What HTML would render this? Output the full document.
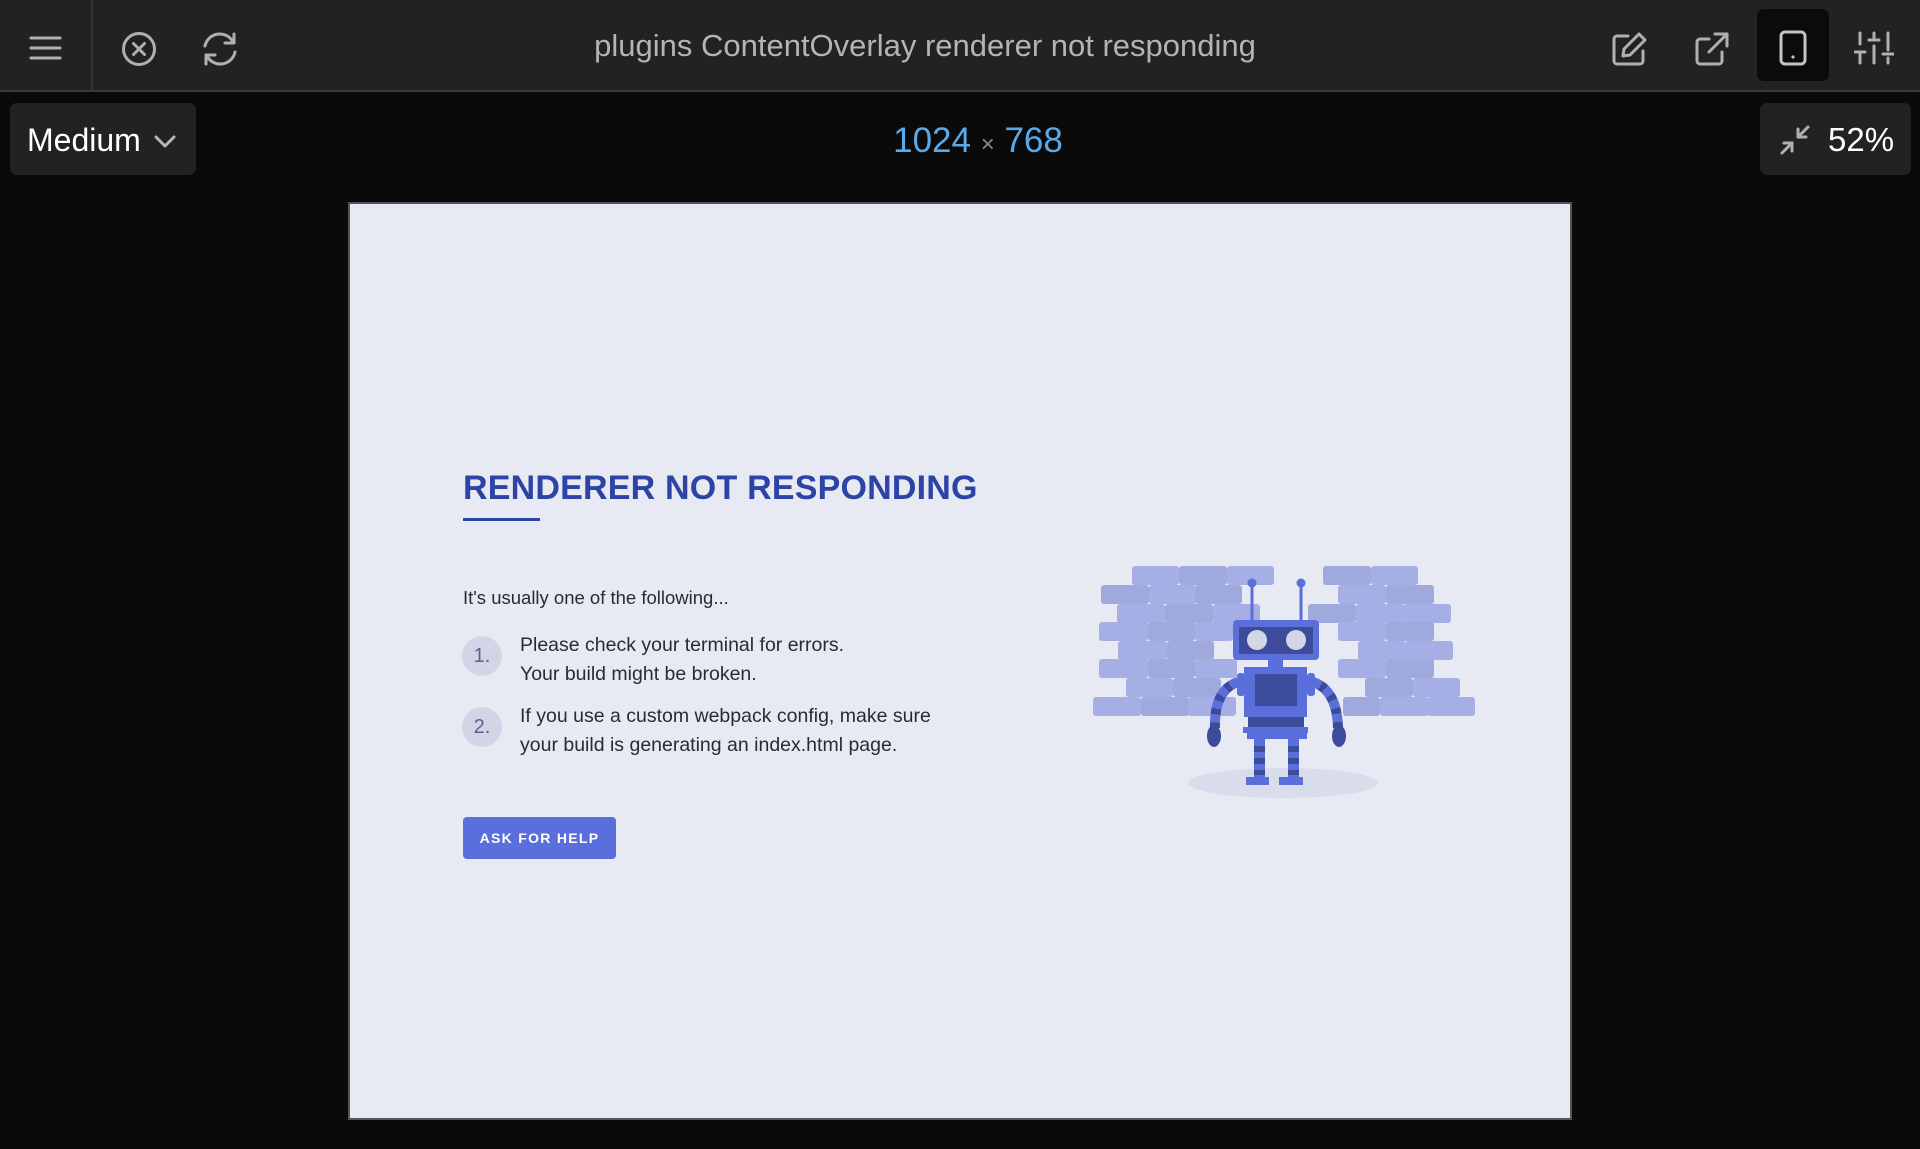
<!DOCTYPE html>
<html><head><meta charset="utf-8"><style>
*{margin:0;padding:0;box-sizing:border-box}
body{width:1920px;height:1149px;background:#0a0a0a;position:relative;overflow:hidden;font-family:"Liberation Sans",sans-serif}
.top{position:absolute;left:0;top:0;width:1920px;height:92px;background:#222;border-bottom:2px solid #3a3a3a}
.div{position:absolute;left:91px;top:0;width:2px;height:92px;background:#333}
.title{position:absolute;left:0;width:1850px;top:28px;text-align:center;color:#b4b4b4;font-size:31px}
svg.ic{position:absolute}
.box{position:absolute;background:#222;border-radius:7px}
.frame{position:absolute;left:348px;top:202px;width:1224px;height:918px;background:#e8eaf3;border:2px solid #555}
.h{position:absolute;left:463px;top:469px;font-size:34px;font-weight:bold;color:#2d44a6;letter-spacing:0.2px}
.t{position:absolute;color:#2a2a33;font-size:19.5px}
.c{position:absolute;width:40px;height:40px;border-radius:50%;background:#d2d5e6;color:#5a6292;font-size:20px;text-align:center;line-height:40px}
</style></head><body>
<div class="top"></div><div class="div"></div>
<svg class="ic" style="left:28px;top:34px" width="36" height="28" viewBox="0 0 36 28"><g stroke="#b0b0b0" stroke-width="3" stroke-linecap="round"><line x1="3" y1="4" x2="32" y2="4"/><line x1="3" y1="14" x2="32" y2="14"/><line x1="3" y1="24" x2="32" y2="24"/></g></svg>
<svg class="ic" style="left:120px;top:30px" width="38" height="38" viewBox="0 0 38 38"><g stroke="#b0b0b0" stroke-width="3" fill="none" stroke-linecap="round"><circle cx="19" cy="19" r="15.5"/><line x1="13.5" y1="13.5" x2="24.5" y2="24.5"/><line x1="24.5" y1="13.5" x2="13.5" y2="24.5"/></g></svg>
<svg class="ic" style="left:200px;top:29px" width="40" height="40" viewBox="0 0 40 40"><g stroke="#b0b0b0" stroke-width="3" fill="none" stroke-linecap="round" stroke-linejoin="round"><path d="M5 17 A15 15 0 0 1 33 13"/><path d="M34 5 L34 14 L25 14"/><path d="M35 23 A15 15 0 0 1 7 27"/><path d="M6 35 L6 26 L15 26"/></g></svg>
<div class="title">plugins ContentOverlay renderer not responding</div>
<svg class="ic" style="left:1610px;top:30px" width="40" height="38" viewBox="0 0 40 38"><g stroke="#b0b0b0" stroke-width="3" fill="none" stroke-linecap="round" stroke-linejoin="round"><path d="M18 6 H7 a3 3 0 0 0 -3 3 V31 a3 3 0 0 0 3 3 H30 a3 3 0 0 0 3 -3 V21"/><path d="M29 4 L35 10 L20 25 L13 26 L14 19 Z"/></g></svg>
<svg class="ic" style="left:1693px;top:30px" width="40" height="38" viewBox="0 0 40 38"><g stroke="#b0b0b0" stroke-width="3" fill="none" stroke-linecap="round" stroke-linejoin="round"><path d="M16 9 H7 a3 3 0 0 0 -3 3 V31 a3 3 0 0 0 3 3 H26 a3 3 0 0 0 3 -3 V22"/><path d="M22 4 H34 V16"/><line x1="34" y1="4" x2="16" y2="22"/></g></svg>
<div class="box" style="left:1757px;top:9px;width:72px;height:72px;background:#0b0b0b"></div>
<svg class="ic" style="left:1778px;top:30px" width="30" height="36" viewBox="0 0 30 36"><g stroke="#c4c4c4" stroke-width="3" fill="none"><rect x="3" y="2" width="24" height="32" rx="4"/></g><circle cx="15" cy="27" r="1.6" fill="#c4c4c4"/></svg>
<svg class="ic" style="left:1854px;top:30px" width="40" height="36" viewBox="0 0 40 36"><g stroke="#b0b0b0" stroke-width="3" stroke-linecap="round"><line x1="6" y1="3" x2="6" y2="14"/><line x1="6" y1="22" x2="6" y2="33"/><line x1="1" y1="22" x2="11" y2="22"/><line x1="20" y1="3" x2="20" y2="8"/><line x1="20" y1="16" x2="20" y2="33"/><line x1="15" y1="10" x2="25" y2="10"/><line x1="34" y1="3" x2="34" y2="20"/><line x1="34" y1="28" x2="34" y2="33"/><line x1="29" y1="24" x2="39" y2="24"/></g></svg>

<div class="box" style="left:10px;top:103px;width:186px;height:72px"></div>
<div style="position:absolute;left:27px;top:122px;color:#fff;font-size:32px">Medium</div>
<svg class="ic" style="left:152px;top:133px" width="26" height="18" viewBox="0 0 26 18"><path d="M4 4 L13 13 L22 4" stroke="#b8b8b8" stroke-width="3" fill="none" stroke-linecap="round" stroke-linejoin="round"/></svg>
<div style="position:absolute;left:0;width:1956px;top:121px;text-align:center;font-size:35px;color:#5aa9e8">1024 <span style="color:#888;font-size:24px">×</span> 768</div>
<div class="box" style="left:1760px;top:103px;width:151px;height:72px"></div>
<svg class="ic" style="left:1778px;top:123px" width="34" height="34" viewBox="0 0 34 34"><g stroke="#b0b0b0" stroke-width="3" fill="none" stroke-linecap="round" stroke-linejoin="round"><line x1="4" y1="30" x2="14" y2="20"/><path d="M6 20 H14 V28"/><line x1="30" y1="4" x2="20" y2="14"/><path d="M20 6 V14 H28"/></g></svg>
<div style="position:absolute;left:1828px;top:121px;color:#fff;font-size:33px">52%</div>

<div class="frame"></div>
<div class="h">RENDERER NOT RESPONDING</div>
<div style="position:absolute;left:463px;top:518px;width:77px;height:3px;background:#2d44a6"></div>
<div class="t" style="left:463px;top:587px;font-size:18.5px">It's usually one of the following...</div>
<div class="c" style="left:462px;top:636px">1.</div>
<div class="t" style="left:520px;top:634px">Please check your terminal for errors.</div>
<div class="t" style="left:520px;top:663px">Your build might be broken.</div>
<div class="c" style="left:462px;top:707px">2.</div>
<div class="t" style="left:520px;top:705px">If you use a custom webpack config, make sure</div>
<div class="t" style="left:520px;top:734px">your build is generating an index.html page.</div>
<div style="position:absolute;left:463px;top:817px;width:153px;height:42px;background:#5a6fdb;border-radius:4px;color:#fff;font-size:14px;font-weight:bold;letter-spacing:1.3px;text-align:center;line-height:42px">ASK FOR HELP</div>

<svg class="ic" style="left:1080px;top:550px" width="420" height="260" viewBox="0 0 420 260">
<g fill="#a6aee6">
<rect x="52" y="16" width="47" height="19" rx="3"/><rect x="99" y="16" width="48" height="19" rx="3" fill="#a0a9dc"/><rect x="147" y="16" width="47" height="19" rx="3"/>
<rect x="21" y="35" width="48" height="19" rx="3" fill="#a0a9dc"/><rect x="69" y="35" width="47" height="19" rx="3"/><rect x="115" y="35" width="47" height="19" rx="3" fill="#a0a9dc"/>
<rect x="37" y="54" width="48" height="19" rx="3"/><rect x="85" y="54" width="48" height="19" rx="3" fill="#a0a9dc"/><rect x="133" y="54" width="47" height="19" rx="3"/>
<rect x="19" y="72" width="49" height="19" rx="3"/><rect x="68" y="72" width="47" height="19" rx="3" fill="#a0a9dc"/><rect x="115" y="72" width="38" height="19" rx="3"/>
<rect x="38" y="91" width="49" height="19" rx="3"/><rect x="87" y="91" width="47" height="19" rx="3" fill="#a0a9dc"/>
<rect x="19" y="109" width="49" height="19" rx="3"/><rect x="68" y="109" width="47" height="19" rx="3" fill="#a0a9dc"/><rect x="115" y="109" width="42" height="19" rx="3"/>
<rect x="46" y="128" width="47" height="19" rx="3"/><rect x="93" y="128" width="48" height="19" rx="3" fill="#a0a9dc"/>
<rect x="13" y="147" width="48" height="19" rx="3"/><rect x="61" y="147" width="48" height="19" rx="3" fill="#a0a9dc"/><rect x="108" y="147" width="48" height="19" rx="3"/>
<rect x="243" y="16" width="48" height="19" rx="3" fill="#a0a9dc"/><rect x="291" y="16" width="47" height="19" rx="3"/>
<rect x="258" y="35" width="48" height="19" rx="3"/><rect x="306" y="35" width="48" height="19" rx="3" fill="#a0a9dc"/>
<rect x="228" y="54" width="48" height="19" rx="3" fill="#a0a9dc"/><rect x="276" y="54" width="48" height="19" rx="3"/><rect x="323" y="54" width="48" height="19" rx="3"/>
<rect x="258" y="72" width="48" height="19" rx="3"/><rect x="306" y="72" width="48" height="19" rx="3" fill="#a0a9dc"/>
<rect x="278" y="91" width="48" height="19" rx="3"/><rect x="325" y="91" width="48" height="19" rx="3"/>
<rect x="258" y="109" width="48" height="19" rx="3"/><rect x="306" y="109" width="48" height="19" rx="3" fill="#a0a9dc"/>
<rect x="285" y="128" width="48" height="19" rx="3" fill="#a0a9dc"/><rect x="333" y="128" width="47" height="19" rx="3"/>
<rect x="263" y="147" width="37" height="19" rx="3" fill="#a0a9dc"/><rect x="300" y="147" width="48" height="19" rx="3"/><rect x="347" y="147" width="48" height="19" rx="3"/>
</g>
<ellipse cx="203" cy="233" rx="95" ry="15" fill="#d9dceb"/>
<g stroke="#5a6fdc" stroke-width="3"><line x1="172" y1="33" x2="172" y2="72"/><line x1="221" y1="33" x2="221" y2="72"/></g>
<circle cx="172" cy="33" r="4.5" fill="#5a6fdc"/><circle cx="221" cy="33" r="4.5" fill="#5a6fdc"/>
<path d="M158 132 Q134 140 135 178" stroke="#5a6fdc" stroke-width="10" fill="none" stroke-dasharray="8 6"/>
<path d="M158 132 Q134 140 135 178" stroke="#3d4c9a" stroke-width="10" fill="none" stroke-dasharray="6 8" stroke-dashoffset="-8"/>
<path d="M233 132 Q257 140 258 178" stroke="#5a6fdc" stroke-width="10" fill="none" stroke-dasharray="8 6"/>
<path d="M233 132 Q257 140 258 178" stroke="#3d4c9a" stroke-width="10" fill="none" stroke-dasharray="6 8" stroke-dashoffset="-8"/>
<ellipse cx="134" cy="186" rx="7" ry="11" fill="#3d4c9a"/><ellipse cx="259" cy="186" rx="7" ry="11" fill="#3d4c9a"/>
<rect x="153" y="70" width="86" height="40" rx="4" fill="#5a6fdc"/>
<rect x="159" y="77" width="74" height="27" fill="#3d4c9a"/>
<circle cx="177" cy="90" r="10" fill="#d3d6e4"/><circle cx="216" cy="90" r="10" fill="#d3d6e4"/>
<rect x="188" y="110" width="15" height="8" fill="#5a6fdc"/>
<rect x="157" y="123" width="8" height="23" rx="3" fill="#5a6fdc"/><rect x="227" y="123" width="8" height="23" rx="3" fill="#5a6fdc"/>
<rect x="164" y="117" width="63" height="50" fill="#5a6fdc"/>
<rect x="175" y="124" width="42" height="32" fill="#3d4c9a"/>
<rect x="168" y="167" width="56" height="10" fill="#3d4c9a"/>
<rect x="163" y="177" width="65" height="6" fill="#5a6fdc"/>
<rect x="167" y="183" width="60" height="6" fill="#5a6fdc"/>
<g><rect x="174" y="189" width="11" height="38" fill="#5a6fdc"/><rect x="208" y="189" width="11" height="38" fill="#5a6fdc"/>
<rect x="174" y="196" width="11" height="6" fill="#3d4c9a"/><rect x="174" y="208" width="11" height="6" fill="#3d4c9a"/><rect x="174" y="220" width="11" height="5" fill="#3d4c9a"/>
<rect x="208" y="196" width="11" height="6" fill="#3d4c9a"/><rect x="208" y="208" width="11" height="6" fill="#3d4c9a"/><rect x="208" y="220" width="11" height="5" fill="#3d4c9a"/></g>
<rect x="166" y="227" width="23" height="8" fill="#5a6fdc"/><rect x="199" y="227" width="24" height="8" fill="#5a6fdc"/>
</svg>
</body></html>
